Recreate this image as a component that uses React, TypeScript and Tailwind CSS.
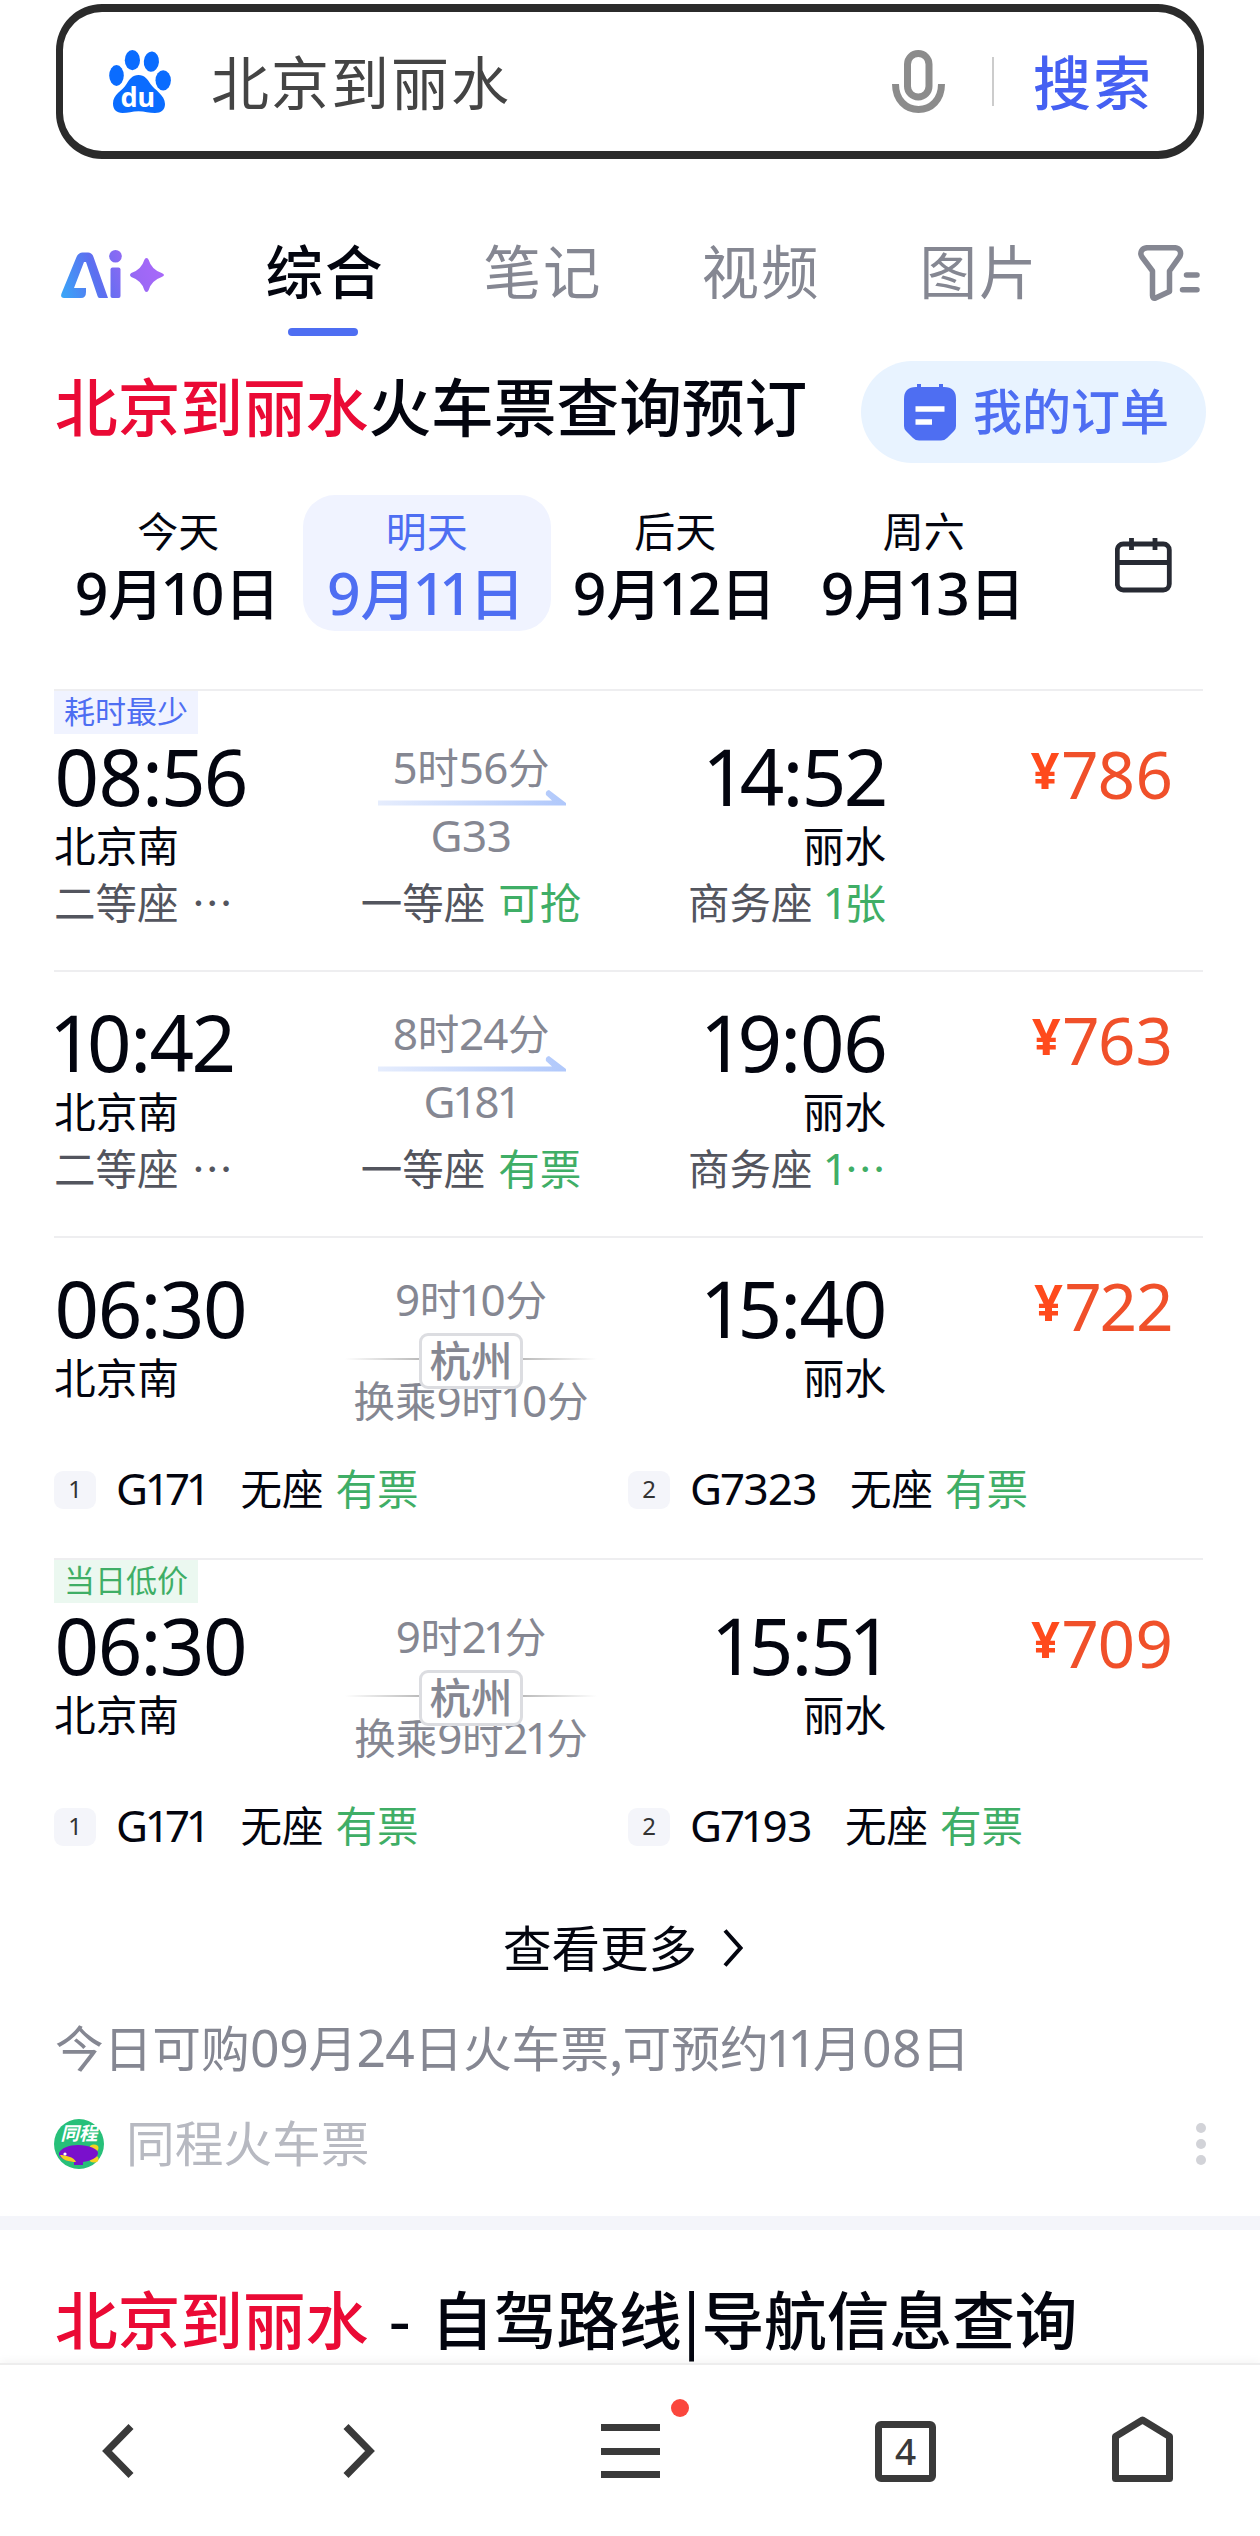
import type { ReactNode } from 'react';

interface Leg {
  no: string;
  train: string;
}

interface Seat {
  name: string;
  left: string;
}

interface Trip {
  tag?: { text: string; green?: boolean };
  depart: string;
  arrive: string;
  duration: string;
  train?: string;
  via?: string;
  price: string;
  seats?: Seat[];
  legs?: Leg[];
}

const tabs = ['综合', '笔记', '视频', '图片'];

const dates = [
  { label: '今天', date: '9月10日' },
  { label: '明天', date: '9月11日' },
  { label: '后天', date: '9月12日' },
  { label: '周六', date: '9月13日' },
];

const trips: Trip[] = [
  {
    tag: { text: '耗时最少' },
    depart: '08:56',
    arrive: '14:52',
    duration: '5时56分',
    train: 'G33',
    price: '786',
    seats: [
      { name: '二等座', left: '…' },
      { name: '一等座', left: '可抢' },
      { name: '商务座', left: '1张' },
    ],
  },
  {
    depart: '10:42',
    arrive: '19:06',
    duration: '8时24分',
    train: 'G181',
    price: '763',
    seats: [
      { name: '二等座', left: '…' },
      { name: '一等座', left: '有票' },
      { name: '商务座', left: '1…' },
    ],
  },
  {
    depart: '06:30',
    arrive: '15:40',
    duration: '9时10分',
    via: '杭州',
    price: '722',
    legs: [
      { no: '1', train: 'G171' },
      { no: '2', train: 'G7323' },
    ],
  },
  {
    tag: { text: '当日低价', green: true },
    depart: '06:30',
    arrive: '15:51',
    duration: '9时21分',
    via: '杭州',
    price: '709',
    legs: [
      { no: '1', train: 'G171' },
      { no: '2', train: 'G7193' },
    ],
  },
];

// Latin letters and digits run slightly larger than the Chinese around them
function mixed(text: string): ReactNode {
  return text.split(/([0-9A-Z]+)/).map((part, i) =>
    i % 2 === 1 ? (
      <span key={i} className="font-['Noto_Sans'] text-[1.06em] leading-none tracking-[-0.010em] proportional-nums">
        {part}
      </span>
    ) : (
      part
    ),
  );
}

function BaiduLogo() {
  return (
    <svg className="h-[63px] w-[62px]" viewBox="0 0 62 63" fill="#0a6cff">
      <ellipse cx="7.5" cy="25.5" rx="7.3" ry="10.4" />
      <ellipse cx="23.4" cy="10.2" rx="7.6" ry="10.1" />
      <ellipse cx="42.4" cy="11.6" rx="7.6" ry="10.1" transform="rotate(5 42.4 11.6)" />
      <ellipse cx="54.2" cy="30.3" rx="7.7" ry="10.1" />
      <path d="M29.5 25c6 0 9 4 12 9 3.500 5.500 14.500 11 14.500 20 0 6-4 9-10 9-6 0-10-1.800-16.500-1.800S19 63 13.500 63C7.500 63 4 59.500 4 53.500 4 44 13.500 41 17.500 34c3-5 6-9 12-9z" />
      <text x="11.500" y="56.500" fill="#fff" fontSize="27" fontWeight="700" fontFamily="Noto Sans">
        du
      </text>
    </svg>
  );
}

function MicIcon() {
  return (
    <svg className="h-[63px] w-[53px]" viewBox="0 0 53 63" fill="none" stroke="#8c8c8c" strokeWidth="7">
      <rect x="15.500" y="3.500" width="21.500" height="43.500" rx="10.700" />
      <path d="M3.500 34C3.500 50 14 59.500 26.500 59.500S49.500 50 49.500 34" />
    </svg>
  );
}

function AiLogo() {
  return (
    <svg className="h-[49px] w-[104px]" viewBox="0 0 104 49" fill="none">
      <defs>
        <linearGradient id="ai" x1="0" y1="48" x2="100" y2="10" gradientUnits="userSpaceOnUse">
          <stop offset="0" stopColor="#38a8f8" />
          <stop offset="0.380" stopColor="#5c6ff0" />
          <stop offset="0.750" stopColor="#9c68f5" />
          <stop offset="1" stopColor="#a968fa" />
        </linearGradient>
      </defs>
      <path
        d="M25 38v4q0 6-5 6H3q-4 0-2.500-4.500L15.500 7q2-4.500 6-4.500H27q4 0 5.500 4.500L47 48h-8.500q-1.500 0-2-2L25 12h-2L13 38z"
        fill="url(#ai)"
      />
      <rect x="49.500" y="17.500" width="10" height="30.500" rx="2" fill="url(#ai)" />
      <circle cx="54.500" cy="6.300" r="6.300" fill="url(#ai)" />
      <path
        d="M85.500 8q1.500 0 2.200 2 2.800 9.500 13 13 2.300.8 2.300 2t-2.300 2q-10.200 3.500-13 13-.700 2-2.200 2t-2.200-2q-2.800-9.500-13-13Q69 26.200 69 25t1.300-2q10.200-3.500 13-13 .7-2 2.200-2z"
        fill="url(#ai)"
      />
    </svg>
  );
}

function FilterIcon() {
  return (
    <svg
      className="h-[56px] w-[63px]"
      viewBox="0 0 63 56"
      fill="none"
      stroke="#858792"
      strokeWidth="5.500"
      strokeLinecap="round"
      strokeLinejoin="round"
    >
      <path d="M9.500 2.700h27c5 0 7.500 4.300 5.200 9L31.500 26v20.500L17.500 53q-3 .800-3-2.500V26L4 12C1.200 7.500 4 2.700 9.500 2.700z" />
      <path d="M48.500 30h10.500M44.500 44.700h14.500" />
    </svg>
  );
}

function OrderIcon() {
  return (
    <svg className="h-[57px] w-[52px]" viewBox="0 0 52 57">
      <path
        d="M12 3h1V0h4v3h18V0h4v3h1q12 0 12 12v27q0 3-2 5l-7 7q-2.500 2.500-6 2.500H15q-3.500 0-6-2.500l-7-7q-2-2-2-5V15Q0 3 12 3z"
        fill="#4e6ef2"
      />
      <path d="M11.500 25h29M11.500 38h16.500" stroke="#fff" strokeWidth="5.500" />
    </svg>
  );
}

function CalendarIcon() {
  return (
    <svg className="h-[55px] w-[57px]" viewBox="0 0 57 55" fill="none" stroke="#272a33" strokeWidth="4.800">
      <rect x="2.300" y="6" width="52" height="46" rx="6" />
      <path d="M2 24.500h53M16.500 0v12M40 0v12" />
    </svg>
  );
}

function SourceIcon() {
  return (
    <svg className="h-[50px] w-[50px]" viewBox="0 0 50 50">
      <circle cx="25" cy="25" r="25" fill="#27c079" />
      <text
        x="6.500"
        y="21"
        fill="#fff"
        fontSize="18.500"
        fontWeight="700"
        fontStyle="italic"
        fontFamily="Noto Sans CJK SC"
      >
        同程
      </text>
      <ellipse cx="40" cy="29" rx="4.500" ry="3.500" fill="#f5d21f" />
      <ellipse cx="40" cy="40" rx="4.500" ry="3.500" fill="#f5d21f" />
      <path d="M5 34c2-5 10-8 19-8 11 0 20 4 20 8 0 5-8 8-15 9v3h-9v-3C12 42 4 39 5 34z" fill="#7a10cc" />
      <path d="M6 36c5 0 14 2 16 7-7 0-14-2-16-7z" fill="#f5d21f" />
      <circle cx="11" cy="35" r="1.600" fill="#fff" />
    </svg>
  );
}

function SearchBar() {
  return (
    <div className="ml-[56px] mt-[4px] flex h-[155px] w-[1148px] items-center rounded-[46px] border-x-[7px] border-y-[8px] border-[#2b2b2b] pl-[46px] pr-[48px]">
      <BaiduLogo />
      <span className="ml-[40px] flex-1 pb-[3px] text-[58px] leading-[70px] tracking-[2px] text-[#444]">
        北京到丽水
      </span>
      <MicIcon />
      <div className="ml-[47px] h-[49px] w-[2px] bg-[#ccc]" />
      <span className="ml-[39px] w-[116px] whitespace-nowrap pb-[3px] text-[58px] font-medium leading-[70px] tracking-[2px] text-[#4560f2]">
        搜索
      </span>
    </div>
  );
}

function TabBar() {
  return (
    <div className="mt-[74px] flex h-[103px] pl-[61px]">
      <div className="mt-[17px]">
        <AiLogo />
      </div>
      <div className="ml-[101px] flex gap-[100px]">
        {tabs.map((tab, i) => (
          <div key={tab} className="flex w-[118px] flex-col items-center justify-between">
            <span
              className={
                i === 0
                  ? 'whitespace-nowrap text-[57.500px] font-medium leading-[72px] tracking-[2px] text-[#03050f]'
                  : 'whitespace-nowrap text-[57.500px] leading-[72px] tracking-[2px] text-[#858792]'
              }
            >
              {tab}
            </span>
            {i === 0 && <div className="mr-[4px] h-[8px] w-[70px] rounded-full bg-[#4e6ef2]" />}
          </div>
        ))}
      </div>
      <div className="ml-[100px] mt-[12px]">
        <FilterIcon />
      </div>
    </div>
  );
}

function DateTabs() {
  return (
    <div className="mt-[32px] flex h-[136px] pl-[54px]">
      {dates.map((d, i) => (
        <div
          key={d.label}
          className={
            i === 1
              ? 'w-[248.500px] rounded-[32px] bg-[#f0f3ff] pt-[14px] text-center text-[#4e6ef2]'
              : 'w-[248.500px] pt-[14px] text-center text-[#03050f]'
          }
        >
          <div className="text-[41px] leading-[40px]">{d.label}</div>
          <div className="mr-[2px] mt-[11px] whitespace-nowrap text-[55.500px] font-medium leading-[62px]">
            {mixed(d.date)}
          </div>
        </div>
      ))}
      <div className="ml-[67px] mt-[43px]">
        <CalendarIcon />
      </div>
    </div>
  );
}

function TripRow({ trip }: { trip: Trip }) {
  return (
    <div className="ml-[54px] mr-[57px] border-t-2 border-[#eeeef0] whitespace-nowrap text-[#03050f]">
      {trip.tag ? (
        <div
          className={
            trip.tag.green
              ? 'mb-[2px] h-[43px] w-[144px] bg-[#ebf8f0] text-center text-[31px] leading-[38px] text-[#3fae66]'
              : 'mb-[2px] h-[43px] w-[144px] bg-[#f0f3ff] text-center text-[31px] leading-[38px] text-[#4e6ef2]'
          }
        >
          {trip.tag.text}
        </div>
      ) : (
        <div className="h-[30px]" />
      )}

      <div className="flex h-[137px]">
        <div className="w-[240px]">
          <Time value={trip.depart} />
          <div className="text-[41.700px] leading-[56px]">北京南</div>
        </div>
        <div className="flex w-[354px] flex-col items-center pt-[9px] text-[41.500px] leading-[40px] text-[#858792]">
          <div className="h-[40px]">{mixed(trip.duration)}</div>
          {trip.via ? (
            <>
              <div className="z-10 mt-[16px] flex items-center">
                <div className="mb-[5px] h-[2px] w-[74px] bg-linear-to-r from-white to-[#bbb]" />
                <div className="h-[56px] w-[104px] rounded-[9px] border-[3px] border-[#dcdde1] bg-white text-center font-medium leading-[46px]">
                  {trip.via}
                </div>
                <div className="mb-[5px] h-[2px] w-[74px] bg-linear-to-r from-[#bbb] to-white" />
              </div>
              <div className="-mt-[11px] h-[40px]">换乘{mixed(trip.duration)}</div>
            </>
          ) : (
            <>
              <svg className="mt-[5px] h-[16px] w-[190px]" viewBox="0 0 190 16">
                <defs>
                  <linearGradient id={trip.train} x1="0" x2="1">
                    <stop offset="0" stopColor="#e6edfd" />
                    <stop offset="1" stopColor="#b0c8fb" />
                  </linearGradient>
                </defs>
                <path d="M2 10.500h174l-6-5.500q-1-4 3-5l17 13v2.500H2z" fill={`url(#${trip.train})`} />
              </svg>
              <div className="mt-[7px] h-[40px]">{mixed(trip.train ?? '')}</div>
            </>
          )}
        </div>
        <div className="w-[238px] text-right">
          <Time value={trip.arrive} />
          <div className="text-[41.700px] leading-[56px]">丽水</div>
        </div>
        <div className="flex h-[76px] w-[287px] justify-end font-['Noto_Sans'] text-[65.500px] leading-[76px] text-[#f0502a] proportional-nums">
          <span className="mr-[4px] text-[50px] font-bold leading-[69px] text-[#ff4a1c]">¥</span>
          <span>{trip.price}</span>
        </div>
      </div>

      {trip.seats && (
        <div className="mb-[41px] flex h-[56px] text-[41.500px] leading-[56px]">
          {trip.seats.map((seat, i) => (
            <div key={seat.name} className={['w-[240px]', 'w-[354px] text-center', 'w-[238px] text-right'][i]}>
              <span className="text-[#53555e]">{seat.name}</span>
              <span className={i === 0 ? 'ml-[13px] text-[#53555e]' : 'ml-[13px] text-[#3fae66]'}>
                {mixed(seat.left)}
              </span>
            </div>
          ))}
        </div>
      )}

      {trip.legs && (
        <div className="mb-[42px] mt-[55px] flex h-[56px] text-[41.500px] leading-[54px]">
          {trip.legs.map((leg) => (
            <div key={leg.no} className="flex w-[574px] shrink-0">
              <div className="mt-[11px] h-[38px] w-[42px] rounded-[9px] bg-[#f4f5fa] text-center font-['Noto_Sans'] text-[24px] leading-[36px] text-[#333]">
                {leg.no}
              </div>
              <span className="ml-[20px]">{mixed(leg.train)}</span>
              <span className="ml-[33px]">无座</span>
              <span className="ml-[12px] text-[#3fae66]">有票</span>
            </div>
          ))}
        </div>
      )}
    </div>
  );
}

function Time({ value }: { value: string }) {
  return (
    <div className="font-['Noto_Sans'] text-[78px] leading-[80px] tracking-[-1.800px] proportional-nums">{value}</div>
  );
}

function BottomNav() {
  return (
    <div className="z-10 mt-auto flex h-[173px] shrink-0 items-start border-t-2 border-[#ededed] bg-white shadow-[0_-3px_8px_rgba(0,0,0,0.040)]">
      <svg className="ml-[102px] mt-[59px] h-[54px] w-[32px]" viewBox="0 0 32 54" fill="none" stroke="#3a3a3a" strokeWidth="7">
        <path d="M29 2.500 5 27l24 24.500" />
      </svg>
      <svg className="ml-[209px] mt-[59px] h-[54px] w-[32px]" viewBox="0 0 32 54" fill="none" stroke="#3a3a3a" strokeWidth="7">
        <path d="M3 2.500 27 27 3 51.500" />
      </svg>
      <div className="relative ml-[226px] mt-[59px] flex h-[54px] w-[59px] flex-col justify-between">
        <div className="h-[7px] bg-[#3a3a3a]" />
        <div className="h-[7px] bg-[#3a3a3a]" />
        <div className="h-[7px] bg-[#3a3a3a]" />
        <div className="absolute -top-[25px] left-[70px] h-[18px] w-[18px] rounded-full bg-[#fb473d]" />
      </div>
      <div className="ml-[215px] mt-[56px] h-[61px] w-[61px] rounded-[6px] border-[7px] border-[#3a3a3a] text-center font-['Noto_Sans'] text-[37px] font-medium leading-[46px] text-[#3a3a3a]">
        4
      </div>
      <svg className="ml-[176px] mt-[51px] h-[66px] w-[61px]" viewBox="0 0 61 66" fill="none" stroke="#3a3a3a" strokeWidth="7" strokeLinejoin="round">
        <path d="M3.500 20.500 30.500 4l27 16.500v42h-54z" />
      </svg>
    </div>
  );
}

export default function App() {
  return (
    <main className="flex h-[2536px] w-[1260px] flex-col overflow-hidden bg-white font-['Noto_Sans_CJK_SC',sans-serif]">
      <SearchBar />
      <TabBar />

      <div className="mt-[25px] flex h-[102px] justify-between pl-[55px] pr-[54px]">
        <h1 className="whitespace-nowrap text-[62.700px] font-medium leading-[85px] text-[#03050f]">
          <span className="text-[#ea0a35]">北京到丽水</span>火车票查询预订
        </h1>
        <div className="flex w-[345px] shrink-0 items-center rounded-full bg-[#e8f3ff] pl-[43px] text-[#4e6ef2]">
          <OrderIcon />
          <span className="ml-[17px] whitespace-nowrap pb-[7px] text-[49px] font-medium leading-[60px]">我的订单</span>
        </div>
      </div>

      <DateTabs />

      <div className="mt-[58px]">
        {trips.map((trip, i) => (
          <TripRow key={i} trip={trip} />
        ))}
      </div>

      <div className="mt-[21px] flex h-[60px] items-center pl-[503px] text-[48.500px] leading-[60px] text-[#03050f]">
        查看更多
        <svg className="ml-[26px] mt-[3px] h-[40px] w-[20px]" viewBox="0 0 20 40" fill="none" stroke="#03050f" strokeWidth="4">
          <path d="M2 2.500 17.500 20 2 37.500" />
        </svg>
      </div>

      <div className="mt-[40px] h-[60px] whitespace-nowrap pl-[55px] text-[48.700px] leading-[60px] text-[#858792]">
        {mixed('今日可购09月24日火车票,可预约11月08日')}
      </div>

      <div className="mt-[38px] flex h-[60px] items-center pl-[54px] pr-[54px]">
        <SourceIcon />
        <span className="ml-[22px] flex-1 pb-[6px] text-[48.700px] leading-[60px] text-[#b7b9c1]">同程火车票</span>
        <div className="flex w-[10px] flex-col gap-[6px]">
          <div className="h-[10px] w-[10px] rounded-full bg-[#d2d3d8]" />
          <div className="h-[10px] w-[10px] rounded-full bg-[#d2d3d8]" />
          <div className="h-[10px] w-[10px] rounded-full bg-[#d2d3d8]" />
        </div>
      </div>

      <div className="mt-[42px] h-[14px] shrink-0 bg-[#f4f5fa]" />

      <h2 className="mt-[44px] h-[86px] whitespace-pre pl-[55px] text-[62.700px] font-medium leading-[86px] text-[#03050f]">
        <span className="text-[#ea0a35]">北京到丽水</span>
        <span className="mx-[6px]"> - </span>
        自驾路线<span className="mx-px">|</span>导航信息查询
      </h2>

      <BottomNav />
    </main>
  );
}
